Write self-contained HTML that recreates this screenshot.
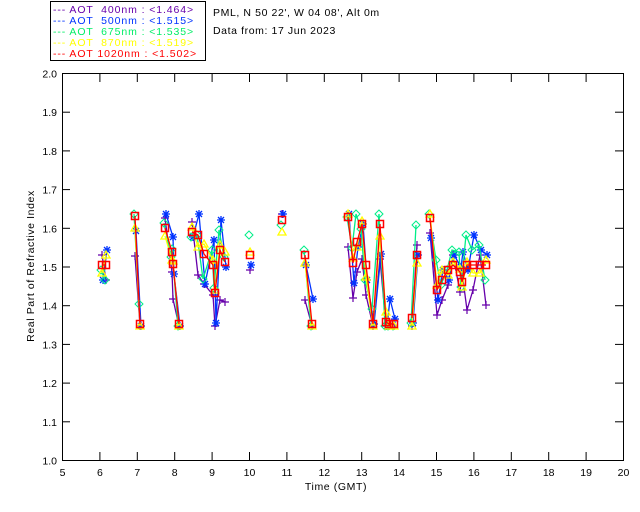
<html><head><style>body{margin:0;background:#fff;width:640px;height:512px;overflow:hidden}</style></head><body>
<svg id="s" width="640" height="512" xmlns="http://www.w3.org/2000/svg" font-family="Liberation Sans, sans-serif" font-size="11">
<rect x="50.5" y="1.5" width="155" height="59" fill="none" stroke="#000"/>
<g font-size="10.5" letter-spacing="0.9">
<text x="53" y="13" fill="#6600aa">--- AOT &#160;400nm : &lt;1.464&gt;</text>
<text x="53" y="24" fill="#0033ff">--- AOT &#160;500nm : &lt;1.515&gt;</text>
<text x="53" y="35" fill="#00ee66">--- AOT &#160;675nm : &lt;1.535&gt;</text>
<text x="53" y="46" fill="#ffff00">--- AOT &#160;870nm : &lt;1.519&gt;</text>
<text x="53" y="57" fill="#ff0000">--- AOT 1020nm : &lt;1.502&gt;</text>
</g>
<text x="213" y="16" font-size="10.5" letter-spacing="0.6">PML, N 50 22', W 04 08', Alt 0m</text>
<text x="213" y="34" font-size="10.5" letter-spacing="0.6">Data from: 17 Jun 2023</text>
<rect x="62.5" y="73.5" width="561" height="387" fill="none" stroke="#000"/>
<g id="ax"></g>
<text x="336" y="490" text-anchor="middle" font-size="10.5" letter-spacing="0.6">Time (GMT)</text>
<text transform="translate(34,266) rotate(-90)" text-anchor="middle" font-size="10.5" letter-spacing="0.6">Real Part of Refractive Index</text>
<g id="d"></g>
</svg>
<script>
var ns="http://www.w3.org/2000/svg",ax=document.getElementById("ax"),d=document.getElementById("d");
function el(t,a,p){var e=document.createElementNS(ns,t);for(var k in a)e.setAttribute(k,a[k]);(p||d).appendChild(e);return e;}
for(var i=5;i<=20;i++){var x=62.5+37.4*(i-5);el("line",{x1:x,y1:460,x2:x,y2:452,stroke:"#000"},ax);el("line",{x1:x,y1:74,x2:x,y2:82,stroke:"#000"},ax);
var t=el("text",{x:x,y:476,"text-anchor":"middle","font-size":"10.5"},ax);t.textContent=i;}
for(var k=0;k<=10;k++){var y=460.5-38.7*k;el("line",{x1:62,y1:y,x2:70,y2:y,stroke:"#000"},ax);el("line",{x1:615,y1:y,x2:623,y2:y,stroke:"#000"},ax);
var t=el("text",{x:57,y:y+4,"text-anchor":"end","font-size":"10.5"},ax);t.textContent=(1+k/10).toFixed(1);}
var R=[[102,265],[106,265],0,[135,216],[140,324],0,[165,228],[172,252],[173,264],[179,324],0,[192,232],[198,235],[204,254],[213,265],[215,293],[220,250],[225,262],0,[250,255],0,[282,220],0,[305,255],[312,324],0,[348,217],[353,263],[357,242],[362,224],[366,265],[373,324],[380,224],[386,322],[389,324],[394,324],0,[412,318],[417,255],0,[430,218],[437,290],[442,280],[448,270],[453,265],[460,272],[462,282],[467,265],[473,265],[480,265],[486,265]];
function cl(v){return Math.max(214,Math.min(326,v));}
function shift(a,dy,dx){return a.map(function(p){return p?[p[0]+(dx||0),cl(p[1]+dy[(p[0])%dy.length])]:0;});}
var B=shift(R,[-30,20,-10,15,-25,5,30,-15,10,-5,0],1),G=shift(R,[-20,10,5,-15,25,-5,15,-30,0,10],-1),Y=shift(R,[5,-10,12,-5,8,-3,15],0),P=shift(R,[40,20,35,-10,50,25,30,15,45],0);
function series(pts,col,mk){var path="",pen=false;pts.forEach(function(p){if(!p){pen=false;return;}path+=(pen?"L":"M")+p[0]+" "+p[1];pen=true;});
el("path",{d:path,fill:"none",stroke:col,"stroke-width":1.3});
pts.forEach(function(p){if(!p)return;var x=p[0],y=p[1];
if(mk=="sq")el("rect",{x:x-3.5,y:y-3.5,width:7,height:7,fill:"none",stroke:col,"stroke-width":1.5});
else if(mk=="di")el("path",{d:"M"+x+" "+(y-4)+"L"+(x+4)+" "+y+"L"+x+" "+(y+4)+"L"+(x-4)+" "+y+"Z",fill:"none",stroke:col});
else if(mk=="tr")el("path",{d:"M"+x+" "+(y-4)+"L"+(x+4)+" "+(y+3)+"L"+(x-4)+" "+(y+3)+"Z",fill:"none",stroke:col,"stroke-width":1.3});
else if(mk=="as")el("path",{d:"M"+(x-4)+" "+y+"H"+(x+4)+"M"+x+" "+(y-4)+"V"+(y+4)+"M"+(x-3)+" "+(y-3)+"L"+(x+3)+" "+(y+3)+"M"+(x-3)+" "+(y+3)+"L"+(x+3)+" "+(y-3),stroke:col,"stroke-width":1.3});
else el("path",{d:"M"+(x-4)+" "+y+"H"+(x+4)+"M"+x+" "+(y-4)+"V"+(y+4),stroke:col,"stroke-width":1.2});});}
series(P,"#6600aa","pl");series(B,"#0033ff","as");series(G,"#00ee88","di");series(Y,"#ffff00","tr");series(R,"#ff0000","sq");
</script>
</body></html>
